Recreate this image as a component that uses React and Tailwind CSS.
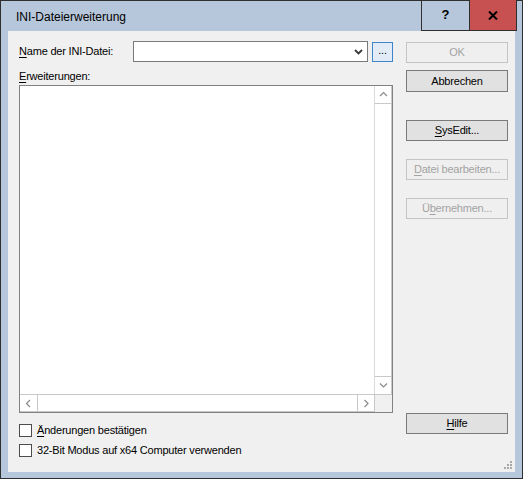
import React from 'react';

const ui = { fontFamily: '"Liberation Sans", Arial, sans-serif' };

function Btn({ children, disabled, className = '' }) {
  return (
    <div
      className={`h-[21px] w-[102px] flex items-center justify-center border text-[11px] tracking-[-0.2px] ${
        disabled
          ? 'border-[#c4c4c4] bg-[#efefef] text-[#a3a3a3]'
          : 'border-[#7a7a7a] bg-[#e1e1e1] text-black'
      } ${className}`}
    >
      {children}
    </div>
  );
}

function Arrow({ dir }) {
  const d = {
    up: 'M1 5 L4.5 1.5 L8 5',
    down: 'M1 1.5 L4.5 5 L8 1.5',
    left: 'M5 1 L1.5 4.5 L5 8',
    right: 'M1.5 1 L5 4.5 L1.5 8',
  }[dir];
  const vert = dir === 'up' || dir === 'down';
  return (
    <svg width={vert ? 9 : 7} height={vert ? 7 : 9} viewBox={vert ? '0 0 9 7' : '0 0 7 9'}>
      <path d={d} fill="none" stroke="#8a8a8a" strokeWidth="1.2" />
    </svg>
  );
}

function Check({ children }) {
  return (
    <div className="flex items-center h-[13px] text-[11px] tracking-[-0.2px]">
      <div className="w-[13px] h-[13px] border border-[#4d4d4d] bg-white" />
      <span className="ml-[5px]">{children}</span>
    </div>
  );
}

export default function App() {
  return (
    <div
      className="w-[523px] h-[479px] border border-[#2f2f2f] bg-[#b7c7db] flex flex-col"
      style={ui}
    >
      {/* title bar */}
      <div className="h-[30px] flex items-start shrink-0">
        <span className="ml-[15px] mt-[7px] text-[12px] text-black">INI-Dateierweiterung</span>
        <div className="ml-auto mr-[5px] flex -mt-px">
          <div className="w-[48px] h-[31px] border-l border-b border-[#2f2f2f] flex items-center justify-center text-[13px] font-bold">
            ?
          </div>
          <div className="w-[48px] h-[31px] border-x border-b border-[#2f2f2f] bg-[#c75050] flex items-center justify-center">
            <svg width="10" height="9" viewBox="0 0 10 9">
              <path d="M1 0.5 L9 8.5 M9 0.5 L1 8.5" stroke="#000" strokeWidth="2" />
            </svg>
          </div>
        </div>
      </div>

      {/* client area */}
      <div className="relative flex-1 mx-[7px] mb-[6px] bg-[#f0f0f0] flex pl-[11px] pt-[10px] text-black">
        <div className="w-[374px] flex flex-col">
          <div className="flex items-center h-[21px] text-[11px] tracking-[-0.2px]">
            <span className="w-[114px]">
              <u className="underline-offset-2">N</u>ame der INI-Datei:
            </span>
            <div className="w-[235px] h-[21px] border border-[#7a7a7a] bg-white flex items-center justify-end pr-[4px]">
              <svg width="9" height="6" viewBox="0 0 9 6">
                <path d="M1 1 L4.5 4.5 L8 1" fill="none" stroke="#3a3a3a" strokeWidth="1.8" />
              </svg>
            </div>
            <div className="ml-[4px] w-[21px] h-[20px] border border-[#3c85c8] bg-[#e3ecf6] flex items-center justify-center text-[11px] leading-none pb-[3px]">
              ...
            </div>
          </div>

          <div className="mt-[8px] h-[15px] text-[11px] leading-[13px] tracking-[-0.2px]">
            <u className="underline-offset-2">E</u>rweiterungen:
          </div>

          <div className="h-[328px] border border-[#828282] bg-white flex flex-col">
            <div className="flex-1 flex">
              <div className="flex-1" />
              <div className="w-[18px] flex flex-col border-l border-[#dadada]">
                <div className="h-[18px] border-b border-r border-[#c8c8c8] flex items-center justify-center">
                  <Arrow dir="up" />
                </div>
                <div className="flex-1 border-r border-[#c8c8c8]" />
                <div className="h-[18px] border-t border-r border-[#c8c8c8] flex items-center justify-center">
                  <Arrow dir="down" />
                </div>
              </div>
            </div>
            <div className="h-[18px] flex border-t border-[#c8c8c8]">
              <div className="w-[18px] border-r border-b border-[#c8c8c8] flex items-center justify-center">
                <Arrow dir="left" />
              </div>
              <div className="flex-1 border-b border-[#c8c8c8]" />
              <div className="w-[17px] border-l border-b border-[#c8c8c8] flex items-center justify-center">
                <Arrow dir="right" />
              </div>
              <div className="w-[18px] bg-[#f0f0f0] border-l border-[#c8c8c8]" />
            </div>
          </div>

          <div className="mt-[11px] flex flex-col gap-[7px]">
            <Check>
              <u className="underline-offset-2">Ä</u>nderungen bestätigen
            </Check>
            <Check>32-Bit Modus auf x64 Computer verwenden</Check>
          </div>
        </div>

        <div className="ml-[13px] flex flex-col">
          <Btn disabled className="mt-px">OK</Btn>
          <Btn className="mt-[7px] h-[22px]">Abbrechen</Btn>
          <Btn className="mt-[28px]">
            <span>
              <u className="underline-offset-2">S</u>ysEdit...
            </span>
          </Btn>
          <Btn disabled className="mt-[18px]">
            <span>
              <u className="underline-offset-2">D</u>atei bearbeiten...
            </span>
          </Btn>
          <Btn disabled className="mt-[18px]">
            <span>
              Ü<u className="underline-offset-2">b</u>ernehmen...
            </span>
          </Btn>
          <Btn className="mt-[194px]">
            <span>
              <u className="underline-offset-2">H</u>ilfe
            </span>
          </Btn>
        </div>

        {/* size grip */}
        <svg className="absolute right-[3px] bottom-[3px]" width="8" height="8" viewBox="0 0 8 8">
          <g fill="#a8a8a8">
            <rect x="6" y="0" width="2" height="2" />
            <rect x="3" y="3" width="2" height="2" />
            <rect x="6" y="3" width="2" height="2" />
            <rect x="0" y="6" width="2" height="2" />
            <rect x="3" y="6" width="2" height="2" />
            <rect x="6" y="6" width="2" height="2" />
          </g>
        </svg>
      </div>
    </div>
  );
}
